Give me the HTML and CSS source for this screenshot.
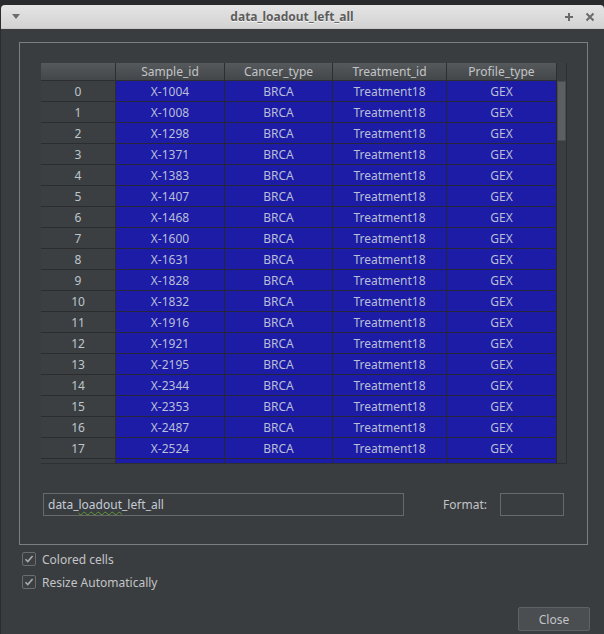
FILE: index.html
```html
<!DOCTYPE html>
<html>
<head>
<meta charset="utf-8">
<link rel="stylesheet" href="styles.css">
</head>
<body>
<div class="screen">
  <div class="window">
    <div class="titlebar">
      <span class="menu-arrow"></span>
      <span class="title">data_loadout_left_all</span>
      <span class="tb-btns">
        <svg width="10" height="10" viewBox="0 0 10 10"><path d="M5 1v8M1 5h8" stroke="#6a6a6a" stroke-width="2"/></svg>
        <svg width="10" height="10" viewBox="0 0 10 10"><path d="M1.5 1.5l7 7M8.5 1.5l-7 7" stroke="#6a6a6a" stroke-width="2"/></svg>
      </span>
    </div>
    <div class="wbody">
      <div class="group">
        <div class="table">
          <div class="grid" id="grid">
            <div class="hcell corner"></div>
            <div class="hcell">Sample_id</div>
            <div class="hcell">Cancer_type</div>
            <div class="hcell">Treatment_id</div>
            <div class="hcell">Profile_type</div>
          </div>
          <div class="scrollbar"><div class="handle"></div></div>
        </div>
        <div class="bottomrow">
          <div class="input"><span>data_<span class="spell">loadout</span>_left_all</span></div>
          <div class="fmt">
            <span class="fmt-label">Format:</span>
            <div class="fmt-box"></div>
          </div>
        </div>
      </div>
      <label class="check"><span class="box"><svg width="12" height="12" viewBox="0 0 12 12"><path d="M2.5 6.2l2.3 2.4 4.8-5.6" fill="none" stroke="#a9abad" stroke-width="1.6"/></svg></span>Colored cells</label>
      <label class="check"><span class="box"><svg width="12" height="12" viewBox="0 0 12 12"><path d="M2.5 6.2l2.3 2.4 4.8-5.6" fill="none" stroke="#a9abad" stroke-width="1.6"/></svg></span>Resize Automatically</label>
      <div class="footer"><button class="close">Close</button></div>
    </div>
  </div>
</div>
<script>
var ids=["X-1004","X-1008","X-1298","X-1371","X-1383","X-1407","X-1468","X-1600","X-1631","X-1828","X-1832","X-1916","X-1921","X-2195","X-2344","X-2353","X-2487","X-2524"];
var g=document.getElementById('grid');
var h='';
for(var i=0;i<ids.length;i++){
  h+='<div class="vcell">'+i+'</div><div class="cell">'+ids[i]+'</div><div class="cell">BRCA</div><div class="cell">Treatment18</div><div class="cell">GEX</div>';
}
h+='<div class="vcell"></div><div class="cell"></div><div class="cell"></div><div class="cell"></div><div class="cell"></div>';
g.insertAdjacentHTML('beforeend',h);
</script>
</body>
</html>
```
FILE: styles.css
```css
html, body {
  margin: 0;
  padding: 0;
  background: #2a2b2d;
  font-family: "Noto Sans", "Open Sans", sans-serif;
  font-size: 12px;
}
.screen {
  width: 604px;
  height: 634px;
  padding: 5px 0 0 1px;
  box-sizing: border-box;
  overflow: hidden;
}
.window {
  width: 603px;
  height: 629px;
  display: flex;
  flex-direction: column;
  background: #3a3d40;
  border-radius: 4px 4px 0 0;
  overflow: hidden;
}
.titlebar {
  height: 24px;
  flex: none;
  background: linear-gradient(#e4e4e4, #d3d3d3);
  display: flex;
  align-items: center;
  border-bottom: 1px solid #c8c8c8;
  box-sizing: border-box;
}
.menu-arrow {
  width: 0;
  height: 0;
  margin-left: 11px;
  border-left: 4px solid transparent;
  border-right: 4px solid transparent;
  border-top: 5px solid #6c6c6c;
}
.title {
  flex: 1;
  text-align: center;
  font-weight: bold;
  font-size: 12px;
  color: #5d5d5d;
  text-shadow: 0 1px 0 #f4f4f4;
}
.tb-btns {
  display: flex;
  gap: 11px;
  margin-right: 9px;
  align-items: center;
}
.wbody {
  flex: 1;
  display: flex;
  flex-direction: column;
  padding: 13px 15px 0 18px;
}
.group {
  border: 1px solid #7c7e80;
  height: 503px;
  box-sizing: border-box;
  padding: 20px 0 0 21px;
  width: 569px;
}
.table {
  width: 526px;
  height: 401px;
  display: flex;
  background: #35383b;
  border-right: 1px solid #2d2f31;
  border-bottom: 1px solid #2d2f31;
  box-sizing: border-box;
  overflow: hidden;
}
.grid {
  display: grid;
  grid-template-columns: 75px 109px 108px 114px 110px;
  grid-auto-rows: 21px;
  grid-template-rows: 18px;
  width: 516px;
  flex: none;
  align-content: start;
}
.hcell {
  background: linear-gradient(#56595c, #44474a);
  color: #c2c4c6;
  border-right: 1px solid #2c2e30;
  border-bottom: 1px solid #2c2e30;
  display: flex;
  align-items: center;
  justify-content: center;
  line-height: 1;
  padding-top: 1px;
  box-sizing: border-box;
}
.vcell {
  background: #3c3f42;
  color: #bcc6cc;
  border-right: 1px solid #2b2c2e;
  border-bottom: 1px solid #2b2c2e;
  display: flex;
  align-items: center;
  justify-content: center;
  box-sizing: border-box;
}
.cell {
  background: #1c1ca6;
  color: #b9bfd6;
  border-right: 1px solid #25263a;
  border-bottom: 1px solid #25263a;
  display: flex;
  align-items: center;
  justify-content: center;
  box-sizing: border-box;
}
.scrollbar {
  flex: none;
  width: 9px;
  background: #3b3e41;
  box-sizing: border-box;
  padding: 18px 0 0 0;
}
.handle {
  width: 9px;
  height: 60px;
  background: #5b5f62;
  border: 1px solid #4a4d50;
  box-sizing: border-box;
}
.bottomrow {
  display: flex;
  align-items: center;
  margin-top: 29px;
  width: 523px;
  padding-left: 2px;
  box-sizing: border-box;
}
.input {
  width: 361px;
  height: 23px;
  border: 1px solid #67696b;
  box-sizing: border-box;
  color: #c4cbd4;
  font-size: 12px;
  display: flex;
  align-items: center;
  padding-left: 4px;
}
.spell {
  text-decoration: underline wavy #5f9a3a;
  text-decoration-thickness: 1px;
  text-underline-offset: 2px;
}
.fmt {
  margin-left: auto;
  display: flex;
  align-items: center;
}
.fmt-label {
  color: #c2c4c6;
  margin-right: 13px;
}
.fmt-box {
  width: 64px;
  height: 23px;
  border: 1px solid #67696b;
  box-sizing: border-box;
}
.check {
  display: flex;
  align-items: center;
  color: #c2c4c6;
  font-size: 12px;
  height: 14px;
  margin-left: 3px;
  margin-top: 7px;
}
.check + .check {
  margin-top: 9px;
}
.box {
  width: 14px;
  height: 14px;
  border: 1px solid #6a6c6e;
  border-radius: 2px;
  box-sizing: border-box;
  display: flex;
  align-items: center;
  justify-content: center;
  margin-right: 6px;
  background: #3c3f42;
}
.footer {
  display: flex;
  justify-content: flex-end;
  margin-top: 18px;
}
.close {
  width: 72px;
  height: 24px;
  margin-right: -1px;
  background: #4a4e51;
  border: 1px solid #5e6265;
  border-radius: 2px;
  color: #c2c4c6;
  font-family: "Noto Sans", "Open Sans", sans-serif;
  font-size: 12px;
  padding: 0;
}
```
